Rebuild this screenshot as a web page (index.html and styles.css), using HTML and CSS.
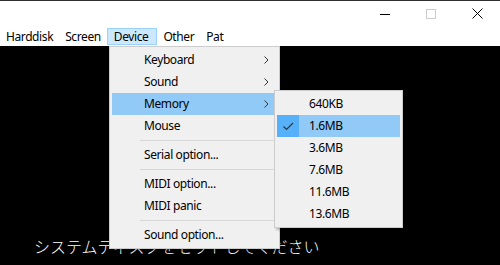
FILE: index.html
```html
<!DOCTYPE html>
<html>
<head>
<meta charset="utf-8">
<link rel="stylesheet" href="styles.css">
</head>
<body>
<div class="window">
  <div class="titlebar">
    <span class="cap"><svg width="10" height="10" viewBox="0 0 10 10"><path d="M0 5.5H10" stroke="#000" stroke-width="1"/></svg></span>
    <span class="cap"><svg width="10" height="10" viewBox="0 0 10 10"><rect x="0.5" y="0.5" width="9" height="9" fill="none" stroke="#ccc" stroke-width="1"/></svg></span>
    <span class="cap"><svg width="11" height="11" viewBox="0 0 11 11"><path d="M0.5 0.5L10.5 10.5M10.5 0.5L0.5 10.5" stroke="#000" stroke-width="1"/></svg></span>
  </div>
  <nav class="menubar">
    <span class="mitem">Harddisk</span>
    <span class="mitem">Screen</span>
    <span class="mitem active">Device</span>
    <span class="mitem">Other</span>
    <span class="mitem">Pat</span>
  </nav>
  <main class="screen">
    <p class="msg">システムディスクをセットしてください</p>
  </main>

  <div class="menu dropdown">
    <div class="item"><span>Keyboard</span><svg class="arrow" width="5" height="8" viewBox="0 0 5 8"><path d="M0.5 0.5L4 4L0.5 7.5" fill="none" stroke="#333" stroke-width="1"/></svg></div>
    <div class="item"><span>Sound</span><svg class="arrow" width="5" height="8" viewBox="0 0 5 8"><path d="M0.5 0.5L4 4L0.5 7.5" fill="none" stroke="#333" stroke-width="1"/></svg></div>
    <div class="item hot"><span>Memory</span><svg class="arrow" width="5" height="8" viewBox="0 0 5 8"><path d="M0.5 0.5L4 4L0.5 7.5" fill="none" stroke="#333" stroke-width="1"/></svg></div>
    <div class="item"><span>Mouse</span></div>
    <div class="sep"></div>
    <div class="item"><span>Serial option...</span></div>
    <div class="sep"></div>
    <div class="item"><span>MIDI option...</span></div>
    <div class="item"><span>MIDI panic</span></div>
    <div class="sep"></div>
    <div class="item"><span>Sound option...</span></div>
  </div>

  <div class="menu submenu">
    <div class="sitem"><span class="check"></span><span>640KB</span></div>
    <div class="sitem hot"><span class="check"><svg width="11" height="9" viewBox="0 0 11 9"><path d="M0.5 4.5L3.5 7.5L10 1" fill="none" stroke="#333" stroke-width="1.2"/></svg></span><span>1.6MB</span></div>
    <div class="sitem"><span class="check"></span><span>3.6MB</span></div>
    <div class="sitem"><span class="check"></span><span>7.6MB</span></div>
    <div class="sitem"><span class="check"></span><span>11.6MB</span></div>
    <div class="sitem"><span class="check"></span><span>13.6MB</span></div>
  </div>
</div>
</body>
</html>
```
FILE: styles.css
```css
html, body {
  margin: 0;
  padding: 0;
}
body {
  width: 500px;
  height: 265px;
  overflow: hidden;
  font-family: "Segoe UI", "Noto Sans", "Open Sans", sans-serif;
  font-size: 12px;
  letter-spacing: -0.4px;
  color: #000;
}
.window {
  position: relative;
  height: 265px;
  box-sizing: border-box;
  border-top: 1px solid #2f2f2f;
  display: flex;
  flex-direction: column;
}
.titlebar {
  height: 26px;
  background: #fff;
  display: flex;
  justify-content: flex-end;
}
.cap {
  width: 46px;
  padding-bottom: 1px;
  display: flex;
  align-items: center;
  justify-content: center;
}
.cap svg {
  display: block;
}
.menubar {
  height: 19px;
  box-sizing: border-box;
  padding: 1px 0 1px 0;
  background: #fff;
  display: flex;
}
.mitem {
  padding: 0 5px;
  border: 1px solid transparent;
  display: flex;
  align-items: center;
  line-height: 15px;
}
.mitem.active {
  padding: 0 8px 0 6px;
  background: #cce8ff;
  border-color: #99d1ff;
}
.screen {
  flex: 1;
  background: #000;
  padding: 0 0 0 34px;
}
.msg {
  margin: 190px 0 0 0;
  color: #fff;
  font-family: "Noto Sans CJK JP", sans-serif;
  font-weight: 300;
  font-size: 16px;
  line-height: 20px;
  letter-spacing: 0;
}
.menu {
  position: absolute;
  background: #f0f0f0;
  border: 1px solid #cccccc;
  padding: 2px;
  box-shadow: 2px 2px 2px rgba(0, 0, 0, 0.22);
}
.dropdown {
  left: 109px;
  top: 45px;
  width: 165px;
}
.item {
  height: 22px;
  box-sizing: border-box;
  padding: 0 8px 1px 32px;
  display: flex;
  align-items: center;
  justify-content: space-between;
}
.item.hot {
  background: #91c9f7;
}
.arrow {
  display: block;
  margin-top: 1px;
}
.sep {
  height: 1px;
  background: #d7d7d7;
  margin: 3px 3px 3px 28px;
}
.submenu {
  left: 274px;
  top: 89px;
  width: 123px;
}
.sitem {
  height: 22px;
  box-sizing: border-box;
  padding-bottom: 1px;
  display: flex;
  align-items: center;
}
.sitem.hot {
  background: #91c9f7;
}
.check {
  width: 22px;
  height: 22px;
  margin: 0 10px 0 0;
  align-self: flex-start;
  display: flex;
  align-items: center;
  justify-content: center;
}
.sitem.hot .check {
  background: #56b0fa;
}
.check svg {
  display: block;
}
```
